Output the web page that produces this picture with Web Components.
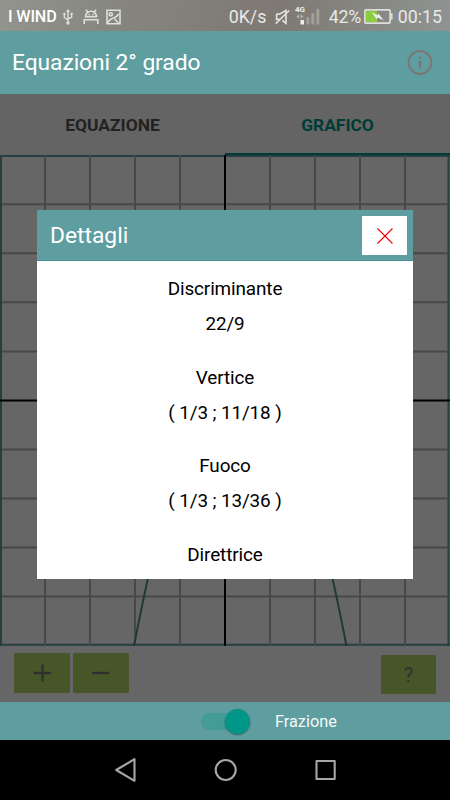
<!DOCTYPE html>
<html lang="it">
<head>
<meta charset="utf-8">
<title>Equazioni 2° grado</title>
<style>
    html, body {
        margin: 0;
        width: 450px;
        height: 800px;
        overflow: hidden;
        background: #000;
        font-family: Roboto, "Liberation Sans", sans-serif;
    }
</style>
</head>
<body>
<equation-app></equation-app>
<script>
class StatusBar extends HTMLElement {
    connectedCallback() {
        this.attachShadow({ mode: 'open' });
        this.shadowRoot.innerHTML = `
            <style>
                :host {
                    display: flex;
                    align-items: center;
                    justify-content: space-between;
                    box-sizing: border-box;
                    height: 31px;
                    padding: 2px 8px 0 8px;
                    background: linear-gradient(100deg, #92948e 0%, #85857e 28%, #7e7972 62%, #8f9492 100%);
                    color: #e9e9e7;
                    font-size: 17.8px;
                    line-height: 29px;
                    white-space: nowrap;
                }
                .side { display: flex; align-items: center; }
                svg { display: block; fill: none; stroke: #dededb; flex: none; }
                .carrier { color: #fff; font-size: 16.2px; font-weight: 500; letter-spacing: -.15px; width: 49px; }
            </style>
            <div class="side">
                <span class="carrier">I WIND</span>
                <svg width="10" height="16" viewBox="0 0 10 16" style="margin-left:6px" stroke-width="1.4">
                    <path d="M5 2v12M1.3 5.5v3.2L5 11M8.7 4.5v3.7L5 9.8"/>
                    <path d="M5 0L3 3h4zM7.6 3.7h2v2h-2z" fill="#dededb" stroke="none"/>
                    <circle cx="1.4" cy="5" r="1.3" fill="#dededb" stroke="none"/>
                    <circle cx="5" cy="14" r="1.7" fill="#dededb" stroke="none"/>
                </svg>
                <svg width="16" height="16" viewBox="0 0 16 16" style="margin-left:10px" stroke-width="1.6">
                    <path d="M2.5 7.6a5.5 5.3 0 0 1 11 0zM4.6 3L3 .8M11.4 3L13 .8M1.2 15v-4.3h13.6V15"/>
                    <path d="M5.3 5.3h1.3M9.4 5.3h1.3"/>
                </svg>
                <svg width="15" height="16" viewBox="0 0 15 16" style="margin-left:7px" stroke-width="1.6">
                    <path d="M1 1.3h13v13.4H1zM1.3 14.2c2-3.5 3.5-4.5 5.7-5 2.8-.7 4.4-2 5.6-4.2M8.5 9.7l4 4.5"/>
                    <circle cx="4.8" cy="5.3" r="1.6"/>
                </svg>
            </div>
            <div class="side">
                <span style="width:38px">0K/s</span>
                <svg width="15" height="16" viewBox="0 0 15 16" style="margin-left:8px" stroke-width="1.7">
                    <path d="M1.5 5.2h3L11 1.5v12.8L7.5 11.5M4.5 10.3H1.6V5M.7 14.7L14.3 1.5"/>
                </svg>
                <svg width="25" height="17" viewBox="0 0 25 17" style="margin-left:5px;overflow:visible" stroke="none">
                    <text x="0" y="4" font-size="8" font-weight="700" fill="#eee" stroke="none">4G</text>
                    <g stroke="none">
                        <path d="M5.5 12h3.5v4.5H5.5z" fill="#eee"/>
                        <path d="M1.3 8.5l2.8-2.3v4.6zM8.5 8.5L5.7 6.2v4.6z" fill="#b5b4b0"/>
                        <path d="M11.3 9.3h3v7.2h-3zM16.3 5.3h3v11.2h-3zM21.3 1h3v15.5h-3z" fill="#a29e98"/>
                    </g>
                </svg>
                <span style="width:32px;margin-left:9px;letter-spacing:-.2px">42%</span>
                <svg width="29" height="15" viewBox="0 0 29 15" style="margin-left:3px">
                    <rect x="2" y="2" width="11" height="11" fill="#8bcc40" stroke="none"/>
                    <rect x=".9" y=".9" width="25.2" height="13.2" rx="1" stroke-width="1.7"/>
                    <path d="M27 4.3h1.6v6.2H27z" fill="#dededb" stroke="none"/>
                    <path d="M7.5 3.2l6 3 .7-2 5.5 7.3-6-3-.8 2z" fill="#eee" stroke="none"/>
                </svg>
                <span style="margin-left:5px">00:15</span>
            </div>
        `;
    }
}

class AppHeader extends HTMLElement {
    connectedCallback() {
        this.attachShadow({ mode: 'open' });
        this.shadowRoot.innerHTML = `
            <style>
                :host {
                    display: flex;
                    align-items: center;
                    justify-content: space-between;
                    box-sizing: border-box;
                    height: 63px;
                    padding: 0 17px 0 12px;
                    background: #5f9ea0;
                    color: #fff;
                    font-size: 22.8px;
                    letter-spacing: -.07px;
                    white-space: nowrap;
                }
                svg { display: block; }
            </style>
            <slot></slot>
            <svg width="26" height="26" viewBox="0 0 26 26" fill="none" stroke="#7b7674" stroke-width="2">
                <circle cx="13" cy="12.5" r="11.4"/>
                <path d="M13 11V18.5M13 6.5v2.3" stroke-width="2.3"/>
            </svg>
        `;
    }
}

class TabItem extends HTMLElement {
    connectedCallback() {
        this.attachShadow({ mode: 'open' });
        this.shadowRoot.innerHTML = `
            <style>
                :host {
                    display: flex;
                    flex: 1;
                    align-items: center;
                    justify-content: center;
                    box-sizing: border-box;
                    padding-top: 2px;
                    border-bottom: 2px solid transparent;
                    color: #555;
                    font-size: 17.4px;
                    font-weight: 700;
                }
                :host([active]) {
                    color: #009688;
                    border-color: #009688;
                }
            </style>
            <slot></slot>
        `;
    }
}

class EquationGraph extends HTMLElement {
    connectedCallback() {
        // 45 x 49 px per unit, origin at (225, 245.5)
        let lines = '';
        for (let i = 1; i < 10; i++) {
            if (i === 5) continue;
            lines += `<path d="M${i * 45} 0V491M2 ${(i * 49.05 + 0.2).toFixed(1)}H450"/>`;
        }
        this.attachShadow({ mode: 'open' });
        this.shadowRoot.innerHTML = `
            <style>
                :host { display: block; height: 491px; }
                svg { display: block; }
            </style>
            <svg width="450" height="491" viewBox="0 0 450 491" fill="none" stroke-width="2">
                <path d="M0 1H450M0 489.7H450M1 0V491M448.5 0V491" stroke="#5f9ea0"/>
                <g stroke="#b4b4b4">${lines}</g>
                <path d="M225 0V491M0 245.5H450" stroke="#000"/>
                <path d="M134 491Q240 -60 346.5 491" stroke="#4f9092"/>
            </svg>
        `;
    }
}

class ToolButton extends HTMLElement {
    connectedCallback() {
        this.attachShadow({ mode: 'open' });
        this.shadowRoot.innerHTML = `
            <style>
                :host {
                    display: flex;
                    align-items: center;
                    justify-content: center;
                    width: 56px;
                    height: 40px;
                    border-radius: 1px;
                    background: #afd764;
                    color: #777;
                    font-size: 20px;
                }
            </style>
            <slot></slot>
        `;
    }
}

class DetailRow extends HTMLElement {
    connectedCallback() {
        this.attachShadow({ mode: 'open' });
        this.shadowRoot.innerHTML = `
            <style>
                :host {
                    display: block;
                    height: 88.7px;
                    text-align: center;
                    font-size: 18.9px;
                    letter-spacing: -.12px;
                    line-height: 22px;
                    color: #000;
                }
                .value { margin-top: 13px; }
            </style>
            <div>${this.getAttribute('label')}</div>
            <div class="value"><slot></slot></div>
        `;
    }
}

class DetailsDialog extends HTMLElement {
    connectedCallback() {
        this.attachShadow({ mode: 'open' });
        this.shadowRoot.innerHTML = `
            <style>
                :host {
                    display: flex;
                    flex-direction: column;
                    width: 376px;
                    height: 368.6px;
                    background: #fff;
                    overflow: hidden;
                }
                header {
                    display: flex;
                    flex: none;
                    align-items: center;
                    justify-content: space-between;
                    box-sizing: border-box;
                    height: 51px;
                    padding: 0 6px 0 13px;
                    background: #5f9ea0;
                    border-bottom: 1px solid #4b9496;
                    color: #fff;
                    font-size: 22.8px;
                }
                .close {
                    display: flex;
                    align-items: center;
                    justify-content: center;
                    width: 45px;
                    height: 39px;
                    margin-top: 1px;
                    background: #fff;
                }
                .body { padding-top: 17px; }
            </style>
            <header>
                <span>${this.getAttribute('heading')}</span>
                <div class="close">
                    <svg width="16" height="16" viewBox="0 0 16 16" stroke="#f00000" stroke-width="1.1">
                        <path d="M.5 .5l15 15M15.5 .5l-15 15"/>
                    </svg>
                </div>
            </header>
            <div class="body"><slot></slot></div>
        `;
    }
}

class FractionSwitch extends HTMLElement {
    connectedCallback() {
        this.attachShadow({ mode: 'open' });
        this.shadowRoot.innerHTML = `
            <style>
                :host {
                    display: flex;
                    align-items: center;
                    box-sizing: border-box;
                    height: 38px;
                    padding-left: 201px;
                    background: #5f9ea0;
                    color: #f4f8f8;
                    font-size: 16.3px;
                }
                .track {
                    display: flex;
                    align-items: center;
                    justify-content: flex-end;
                    width: 49px;
                    height: 17px;
                    margin-right: 25px;
                    border-radius: 9px;
                    background: #449b98;
                }
                .thumb {
                    width: 25px;
                    height: 25px;
                    border-radius: 50%;
                    background: #009688;
                    box-shadow: 0 1px 2px rgba(0, 0, 0, .4);
                }
            </style>
            <div class="track"><div class="thumb"></div></div>
            <slot></slot>
        `;
    }
}

class NavBar extends HTMLElement {
    connectedCallback() {
        this.attachShadow({ mode: 'open' });
        this.shadowRoot.innerHTML = `
            <style>
                :host {
                    display: flex;
                    align-items: center;
                    justify-content: center;
                    gap: 76px;
                    height: 60px;
                    background: #000;
                }
                svg { display: block; fill: none; stroke: #a6a6a6; stroke-width: 2.1; stroke-linejoin: round; }
            </style>
            <svg width="24" height="24" viewBox="0 0 24 24"><path d="M21.5 1.2v21.6L3.2 12z"/></svg>
            <svg width="24" height="24" viewBox="0 0 24 24"><circle cx="12.7" cy="12" r="10"/></svg>
            <svg width="24" height="24" viewBox="0 0 24 24"><path d="M3.5 3h18.2v18H3.5z"/></svg>
        `;
    }
}

class EquationApp extends HTMLElement {
    connectedCallback() {
        this.attachShadow({ mode: 'open' });
        this.shadowRoot.innerHTML = `
            <style>
                :host { display: block; width: 450px; height: 800px; }
                main {
                    position: relative;
                    height: 608px;
                    background: #fff;
                }
                nav { display: flex; height: 61px; background: #fafafa; }
                .tools {
                    display: flex;
                    align-items: flex-start;
                    height: 49px;
                    padding: 7px 14px 0;
                    gap: 3px;
                }
                .help { width: 55px; height: 39px; margin: 2px 0 0 auto; }
                .scrim {
                    position: absolute;
                    inset: 0;
                    display: flex;
                    justify-content: center;
                    align-items: flex-start;
                    box-sizing: border-box;
                    padding-top: 116px;
                    background: rgba(0, 0, 0, .6);
                }
            </style>
            <status-bar></status-bar>
            <app-header>Equazioni 2° grado</app-header>
            <main>
                <nav>
                    <tab-item>EQUAZIONE</tab-item>
                    <tab-item active>GRAFICO</tab-item>
                </nav>
                <equation-graph></equation-graph>
                <div class="tools">
                    <tool-button>
                        <svg width="18" height="18" stroke="#777" stroke-width="2.4"><path d="M.7 9h17.3M9.5 .5v17"/></svg>
                    </tool-button>
                    <tool-button>
                        <svg width="18" height="18" stroke="#777" stroke-width="2.4"><path d="M0 9h17.5"/></svg>
                    </tool-button>
                    <tool-button class="help">?</tool-button>
                </div>
                <div class="scrim">
                    <details-dialog heading="Dettagli">
                        <detail-row label="Discriminante">22/9</detail-row>
                        <detail-row label="Vertice">( 1/3 ; 11/18 )</detail-row>
                        <detail-row label="Fuoco">( 1/3 ; 13/36 )</detail-row>
                        <detail-row label="Direttrice"></detail-row>
                    </details-dialog>
                </div>
            </main>
            <fraction-switch>Frazione</fraction-switch>
            <nav-bar></nav-bar>
        `;
    }
}

customElements.define('status-bar', StatusBar);
customElements.define('app-header', AppHeader);
customElements.define('tab-item', TabItem);
customElements.define('equation-graph', EquationGraph);
customElements.define('tool-button', ToolButton);
customElements.define('detail-row', DetailRow);
customElements.define('details-dialog', DetailsDialog);
customElements.define('fraction-switch', FractionSwitch);
customElements.define('nav-bar', NavBar);
customElements.define('equation-app', EquationApp);
</script>
</body>
</html>
